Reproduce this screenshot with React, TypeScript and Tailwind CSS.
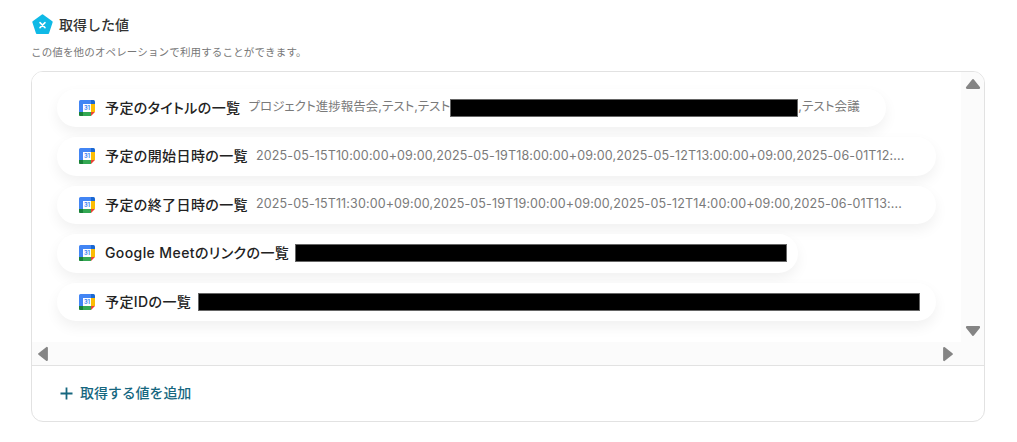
import React from "react";

const font = 'Inter, "Noto Sans CJK JP", sans-serif';

function CalIcon() {
  return (
    <svg width="16" height="16" viewBox="0 0 16 16" className="shrink-0">
      <path d="M1.5 0H12V4H4V12H0V1.5A1.5 1.5 0 0 1 1.5 0Z" fill="#4285f4" />
      <path d="M12 0H14.5A1.5 1.5 0 0 1 16 1.5V4H12Z" fill="#1967d2" />
      <rect x="12" y="4" width="4" height="8" fill="#fbbc04" />
      <path d="M4 12H12V16H1.5A1.5 1.5 0 0 1 0 14.5V12H4Z" fill="#34a853" />
      <path d="M0 12H4V16H1.5A1.5 1.5 0 0 1 0 14.5Z" fill="#188038" />
      <path d="M12 12H16L12 16Z" fill="#ea4335" />
      <rect x="4" y="4" width="8" height="8" fill="#fff" />
      <text x="8" y="10.4" textAnchor="middle" fontSize="5.6" fontWeight="700" fill="#4285f4" fontFamily="Inter, sans-serif">31</text>
    </svg>
  );
}

function Redacted({ className }: { className: string }) {
  return <span className={`block h-[18px] shrink-0 bg-black border border-[#666] ${className}`} />;
}

function Pill({ label, width, children }: { label: string; width: string; children?: React.ReactNode }) {
  return (
    <div className={`flex h-[38.5px] shrink-0 items-center rounded-full bg-white pl-[22px] shadow-[0_6px_14px_rgba(0,0,0,0.06)] ${width}`}>
      <CalIcon />
      <span className="ml-[10px] shrink-0 pb-[1px] text-[14px] font-medium tracking-[0.4px] text-[#222] [font-feature-settings:'palt']">{label}</span>
      <div className="ml-2 flex min-w-0 items-center text-[12.5px] tracking-[0.13px] text-[#7a7a7a] [font-feature-settings:'palt']">{children}</div>
    </div>
  );
}

function Tri({ dir }: { dir: "up" | "down" | "left" | "right" }) {
  const rot = { up: 0, down: 180, left: 270, right: 90 }[dir];
  return (
    <svg width="16" height="12" viewBox="0 0 16 12" style={{ transform: `rotate(${rot}deg)` }}>
      <path d="M8 2.2 L14 9.8 H2 Z" fill="#858585" stroke="#858585" strokeWidth="2.2" strokeLinejoin="round" />
    </svg>
  );
}

export default function App() {
  return (
    <div className="h-[442px] w-[1017px] bg-white pl-[31px] pt-[14px]" style={{ fontFamily: font }}>
      <div className="flex h-[21px] items-center pl-[1px]">
        <svg width="21" height="21" viewBox="0 0 21 21">
          <path d="M10.5 1.2 L19.8 7.9 L16.2 19 H4.8 L1.2 7.9 Z" fill="#0fb9e6" stroke="#0fb9e6" strokeWidth="1.8" strokeLinejoin="round" />
          <path d="M8 8.6 L13 13.6 M13 8.6 L8 13.6" stroke="#fff" strokeWidth="1.5" strokeLinecap="round" />
        </svg>
        <span className="ml-[6px] text-[14px] font-medium text-[#333]">取得した値</span>
      </div>
      <p className="mt-[11px] text-[10.5px] leading-[14px] tracking-[0.15px] text-[#777]">この値を他のオペレーションで利用することができます。</p>
      <div className="mt-[11px] h-[351px] w-[954px] overflow-hidden rounded-[12px] border border-[#e2e2e2]">
        <div className="flex h-[294px] border-b border-[#e2e2e2] bg-[#fbfbfb]">
          <div className="flex w-[929px] flex-col">
            <div className="flex h-[270px] flex-col gap-[10px] bg-white pl-[25px] pt-[16.5px]">
              <Pill label="予定のタイトルの一覧" width="w-[829px]">
                <span className="whitespace-nowrap tracking-[0.03px]">プロジェクト進捗報告会,テスト,テスト</span>
                <Redacted className="w-[348px]" />
                <span className="whitespace-nowrap">,テスト会議</span>
              </Pill>
              <Pill label="予定の開始日時の一覧" width="w-[879px]">
                <span className="whitespace-nowrap">2025-05-15T10:00:00+09:00,2025-05-19T18:00:00+09:00,2025-05-12T13:00:00+09:00,2025-06-01T12:...</span>
              </Pill>
              <Pill label="予定の終了日時の一覧" width="w-[879px]">
                <span className="whitespace-nowrap">2025-05-15T11:30:00+09:00,2025-05-19T19:00:00+09:00,2025-05-12T14:00:00+09:00,2025-06-01T13:...</span>
              </Pill>
              <Pill label="Google Meetのリンクの一覧" width="w-[741px]">
                <Redacted className="-ml-[2px] w-[492px]" />
              </Pill>
              <Pill label="予定IDの一覧" width="w-[879px]">
                <Redacted className="-ml-[1px] w-[722px]" />
              </Pill>
            </div>
            <div className="flex flex-1 items-center justify-between pl-[3px] pr-[5px]">
              <Tri dir="left" />
              <Tri dir="right" />
            </div>
          </div>
          <div className="flex flex-1 flex-col items-center justify-between pb-[28px] pt-[6px]">
            <Tri dir="up" />
            <Tri dir="down" />
          </div>
        </div>
        <div className="flex h-[52px] items-center pl-[27px]">
          <svg width="15" height="15" viewBox="0 0 15 15" className="mt-[2px]">
            <path d="M7.5 1.5V13.5M1.5 7.5H13.5" stroke="#16677f" strokeWidth="1.8" />
          </svg>
          <span className="ml-[6px] text-[14px] font-medium tracking-[-0.1px] text-[#16677f]">取得する値を追加</span>
        </div>
      </div>
    </div>
  );
}
